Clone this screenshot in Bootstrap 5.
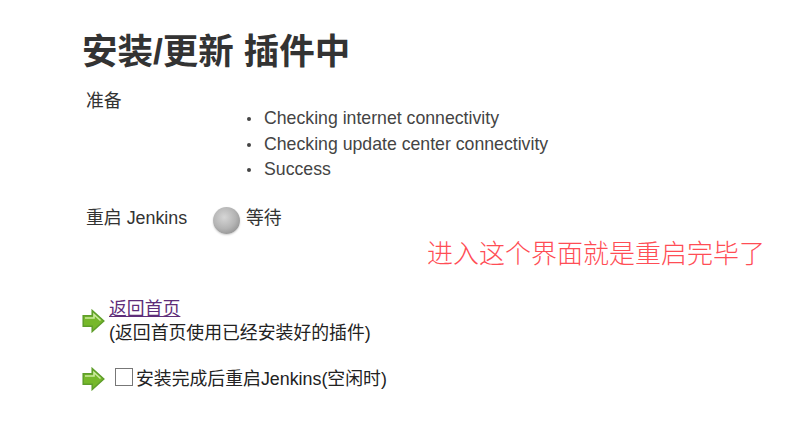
<!DOCTYPE html>
<html lang="zh-CN">
<head>
<meta charset="utf-8">
<title>安装/更新 插件中</title>
<link href="https://cdn.jsdelivr.net/npm/bootstrap@5.3.0/dist/css/bootstrap.min.css" rel="stylesheet">
<style>
html,body{height:100%;overflow:hidden}
body{font-family:"Liberation Sans","Noto Sans CJK SC",sans-serif;color:#333;background:#fff;font-size:17.85px;line-height:1.2}
.page-wrap{padding:30px 0 0 82px}
.page-title{font-size:35.5px;font-weight:700;line-height:44px;margin:0 0 16px;color:#333}
.step-label{width:131px;padding-left:4px;flex:none}
.step-label-top{line-height:22px}
.check-list{list-style:none;margin:16px 0 0;padding:0 0 0 33px;color:#444;font-size:17.7px}
.check-list li{line-height:25.5px;position:relative;padding-left:18px}
.check-list li::before{content:"";position:absolute;left:1px;top:11px;width:4px;height:4px;border-radius:50%;background:#444}
.restart-row{margin-top:20px;height:32px}
.status-ball{width:27px;height:27px;border-radius:50%;background:radial-gradient(circle at 42% 38%,#d6d6d6 0,#b4b4b4 50%,#8e8e8e 85%,#a8a8a8 100%);box-shadow:0 1px 2px #ccc;margin:3px 6px 0 0;flex:none}
.note-row{font-size:26px;color:#ff4d55;line-height:30px;text-align:right;padding-right:22px;margin-top:4px;font-weight:300}
.arrow-icon{width:23px;height:24px;flex:none}
.action-home{margin-top:28px}
.home-link{color:#5e2d79;line-height:24px;display:block}
.home-desc{line-height:25px;color:#222}
.restart-opt{margin-top:21px;color:#222;line-height:25px}
.box-mark{width:18px;height:18px;border:1px solid #777;background:#fff;display:block;flex:none;margin:0 3px 0 10px;transform:translateY(-2px)}
</style>
</head>
<body>
<div class="page-wrap">
  <h1 class="page-title">安装/更新 插件中</h1>
  <div class="d-flex">
    <div class="step-label step-label-top">准备</div>
    <ul class="check-list">
      <li>Checking internet connectivity</li>
      <li>Checking update center connectivity</li>
      <li>Success</li>
    </ul>
  </div>
  <div class="d-flex align-items-center restart-row">
    <div class="step-label">重启 Jenkins</div>
    <span class="status-ball"></span>
    <span>等待</span>
  </div>
  <div class="note-row">进入这个界面就是重启完毕了</div>
  <div class="d-flex align-items-center action-home">
    <svg class="arrow-icon" viewBox="0 0 23 24"><path d="M1.2 6.800h9V1.500L21.800 12 10.200 22.500V17.200h-9z" fill="#76b82a" stroke="#5f9e2a" stroke-width="1.500"/><path d="M3 9h9V5.500l6.500 6" fill="none" stroke="#cdeaa0" stroke-width="1.600"/></svg>
    <div class="ms-1">
      <a class="home-link" href="#">返回首页</a>
      <div class="home-desc">(返回首页使用已经安装好的插件)</div>
    </div>
  </div>
  <div class="d-flex align-items-center restart-opt">
    <svg class="arrow-icon" viewBox="0 0 23 24"><path d="M1.2 6.800h9V1.500L21.800 12 10.200 22.500V17.200h-9z" fill="#76b82a" stroke="#5f9e2a" stroke-width="1.500"/><path d="M3 9h9V5.500l6.500 6" fill="none" stroke="#cdeaa0" stroke-width="1.600"/></svg>
    <span class="box-mark"></span>
    <span>安装完成后重启Jenkins(空闲时)</span>
  </div>
</div>
<script src="https://cdn.jsdelivr.net/npm/bootstrap@5.3.0/dist/js/bootstrap.bundle.min.js"></script>
</body>
</html>
